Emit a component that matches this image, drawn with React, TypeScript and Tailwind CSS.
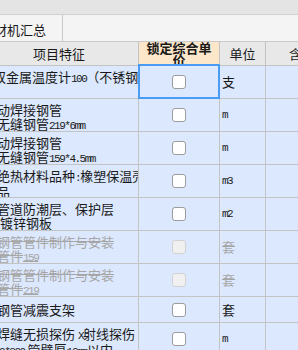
import React from "react";

type Line = { t: string; o: number };
type Row = {
  h: number;
  lines: Line[];
  unit: string;
  disabled?: boolean;
  selected?: boolean;
  pt: number;
};

const rows: Row[] = [
  { h: 33, pt: 4, lines: [{ t: "双金属温度计100（不锈钢", o: -7 }], unit: "支", selected: true },
  { h: 33, pt: 4, lines: [{ t: "动焊接钢管", o: -3 }, { t: "无缝钢管219*6mm", o: -3 }], unit: "m" },
  { h: 33, pt: 4, lines: [{ t: "动焊接钢管", o: -3 }, { t: "无缝钢管159*4.5mm", o: -3 }], unit: "m" },
  { h: 33, pt: 4, lines: [{ t: "绝热材料品种:橡塑保温壳", o: -3 }, { t: "品", o: -3 }], unit: "m3" },
  { h: 33, pt: 4, lines: [{ t: "管道防潮层、保护层", o: -3 }, { t: "镀锌钢板", o: 0 }], unit: "m2" },
  { h: 33, pt: 4, lines: [{ t: "钢管管件制作与安装", o: -3 }, { t: "管件159", o: -3 }], unit: "套", disabled: true },
  { h: 33, pt: 4, lines: [{ t: "钢管管件制作与安装", o: -3 }, { t: "管件219", o: -3 }], unit: "套", disabled: true },
  { h: 26, pt: 6, lines: [{ t: "钢管减震支架", o: -3 }], unit: "套" },
  { h: 33, pt: 4, lines: [{ t: "焊缝无损探伤 X射线探伤", o: -3 }, { t: "80*300 管壁厚16mm以内", o: -6 }], unit: "m" },
];

// latin runs use a narrow mono face, CJK stays in Noto
function Mixed({ text }: { text: string }) {
  const parts = text.split(/([\x21-\x7E]+)/);
  return (
    <>
      {parts.map((p, i) =>
        /^[\x21-\x7E]+$/.test(p) ? (
          <span key={i} className="font-['Liberation_Mono',monospace] text-[11px] tracking-[-1.5px]">
            {p}
          </span>
        ) : (
          <span key={i}>{p}</span>
        )
      )}
    </>
  );
}

function Checkbox({ disabled }: { disabled?: boolean }) {
  return (
    <div
      className={
        disabled
          ? "h-[14px] w-[14px] rounded-[3px] border border-[#d2d2d2] bg-[#f0f0f0]"
          : "h-[14px] w-[14px] rounded-[3px] border border-[#9c9c9c] bg-white"
      }
    />
  );
}

export default function App() {
  return (
    <div className="h-[350px] w-[298px] overflow-hidden bg-white font-['Noto_Sans_CJK_SC',sans-serif] text-[13px] text-[#1a1a1a]">
      <div className="h-[15px] border-b border-[#d0d0d0] bg-[#e4e4e4]" />

      <div className="flex h-[27px] border-b border-[#cacaca] bg-[#f4f4f4]">
        <div className="w-[63px] overflow-hidden border-r border-[#c8c8c8]">
          <div className="ml-[-6px] whitespace-nowrap pt-[8px] leading-[14px]">材机汇总</div>
        </div>
      </div>

      <div className="flex h-[24px] border-b border-[#c3c3c3] bg-[#e8e8e8]">
        <div className="flex w-[139px] items-center border-r border-[#c3c3c3] pl-[33px]">项目特征</div>
        <div className="flex w-[81px] items-center justify-center overflow-hidden border-r border-[#c3c3c3] bg-[#fde7cb] px-[7px] text-center font-bold leading-[12px]">
          锁定综合单价
        </div>
        <div className="flex w-[46px] items-center justify-center border-r border-[#c3c3c3]">单位</div>
        <div className="flex flex-1 items-center overflow-hidden whitespace-nowrap pl-[23px]">含量</div>
      </div>

      {rows.map((r, i) => (
        <div
          key={i}
          className="flex border-b border-[#c3c3c3] bg-[#dce8fd]"
          style={{ height: r.h }}
        >
          <div
            className={
              "w-[139px] overflow-hidden border-r border-[#c3c3c3] leading-[14px] " +
              (r.disabled ? "text-[#a6a6a6] line-through" : "")
            }
            style={{ paddingTop: r.pt }}
          >
            {r.lines.map((l, j) => (
              <div key={j} className="whitespace-nowrap" style={{ marginLeft: l.o }}>
                <Mixed text={l.t} />
              </div>
            ))}
          </div>
          <div className="relative flex w-[81px] items-center justify-center border-r border-[#c3c3c3]">
            <Checkbox disabled={r.disabled} />
            {r.selected && (
              <div className="absolute -top-[2px] -bottom-px -left-px -right-px border-2 border-[#4a9bf4]" />
            )}
          </div>
          <div
            className={
              "flex w-[46px] items-center border-r border-[#c3c3c3] pl-[2px] " +
              (r.disabled ? "text-[#a6a6a6] line-through" : "")
            }
          >
            <Mixed text={r.unit} />
          </div>
          <div className="flex-1" />
        </div>
      ))}
    </div>
  );
}
